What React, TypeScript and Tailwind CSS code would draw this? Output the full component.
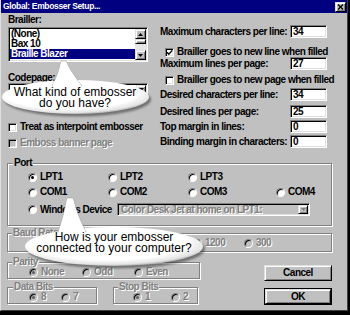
import React from 'react';

const txt = 'text-[10px] font-bold leading-[10px] tracking-[-0.5px] whitespace-nowrap';
const dis = 'text-[#808080] [text-shadow:1px_1px_0_#fff]';
const sunken =
  'border border-t-[#808080] border-l-[#808080] border-b-white border-r-white shadow-[inset_1px_1px_0_#000,inset_-1px_-1px_0_#dfdfdf]';
const raised =
  'border border-t-[#dfdfdf] border-l-[#dfdfdf] border-b-black border-r-black shadow-[inset_1px_1px_0_#fff,inset_-1px_-1px_0_#808080]';
const etched = 'border border-[#808080] shadow-[inset_1px_1px_0_#fff,1px_1px_0_#fff]';

function Radio({ on, off }: { on?: boolean; off?: boolean }) {
  return (
    <span
      className={`flex h-[9px] w-[9px] shrink-0 items-center justify-center rounded-full border border-t-[#808080] border-l-[#808080] border-b-white border-r-white shadow-[inset_1px_1px_0_#000] ${
        off ? 'bg-[#c0c0c0]' : 'bg-white'
      }`}
    >
      {on && <span className={`h-[3px] w-[3px] rounded-full ${off ? 'bg-[#606060]' : 'bg-black'}`} />}
    </span>
  );
}

function Check({ on, off }: { on?: boolean; off?: boolean }) {
  return (
    <span className={`flex h-[9px] w-[9px] shrink-0 items-center justify-center ${sunken} ${off ? 'bg-[#c0c0c0]' : 'bg-white'}`}>
      {on && (
        <svg width="7" height="7" viewBox="0 0 7 7">
          <path d="M1 3.3 L2.8 5.2 L6.2 1.4" fill="none" stroke="#000" strokeWidth="1.4" />
        </svg>
      )}
    </span>
  );
}

function Opt({ label, on, off }: { label: string; on?: boolean; off?: boolean }) {
  return (
    <div className="flex items-center gap-[3px]">
      <Radio on={on} off={off} />
      <span className={`${txt} ${off ? dis : 'text-black'}`}>{label}</span>
    </div>
  );
}

function Arrow({ dir = 'down', gray }: { dir?: 'up' | 'down'; gray?: boolean }) {
  return (
    <svg width="5" height="3" viewBox="0 0 5 3">
      <path d={dir === 'down' ? 'M0 0 H5 L2.5 3 Z' : 'M0 3 H5 L2.5 0 Z'} fill={gray ? '#808080' : '#000'} />
    </svg>
  );
}

function Field({ value }: { value: string }) {
  return (
    <div className={`flex h-[13px] w-[37px] items-center bg-white pl-[2px] ${sunken}`}>
      <span className={txt}>{value}</span>
    </div>
  );
}

function Row({ label, value, className }: { label: string; value: string; className: string }) {
  return (
    <div className={`flex h-[13px] items-center justify-between ${className}`}>
      <span className={txt}>{label}</span>
      <Field value={value} />
    </div>
  );
}

function Bubble({
  id,
  w,
  h,
  cx,
  cy,
  rx,
  ry,
  tail,
}: {
  id: string;
  w: number;
  h: number;
  cx: number;
  cy: number;
  rx: number;
  ry: number;
  tail: string;
}) {
  return (
    <svg className="absolute left-0 top-0 overflow-visible" width={w} height={h}>
      <defs>
        <radialGradient id={id} cx="0.46" cy="0.4" r="0.62">
          <stop offset="0.72" stopColor="#fff" />
          <stop offset="0.9" stopColor="#e4e4e4" />
          <stop offset="1" stopColor="#9c9c9c" />
        </radialGradient>
        <filter id={`${id}b`} x="-10%" y="-10%" width="120%" height="130%">
          <feGaussianBlur stdDeviation="1" />
        </filter>
      </defs>
      <g transform="translate(2 2.5)" fill="#303030" opacity="0.55" filter={`url(#${id}b)`}>
        <ellipse cx={cx} cy={cy} rx={rx} ry={ry} />
      </g>
      <ellipse cx={cx} cy={cy} rx={rx} ry={ry} fill={`url(#${id})`} />
      <path d={tail} fill="#fff" stroke="#9a9a9a" strokeWidth="0.5" />
      <path d={tail} fill="#fff" transform="translate(0 1.5)" />
    </svg>
  );
}

export default function App() {
  return (
    <div className="h-[315px] w-[350px] overflow-hidden bg-black font-['Liberation_Sans',Arial,sans-serif]">
      <div className="relative h-[311px] w-[348px] border-b border-l border-r border-b-[#404040] border-l-[#dfdfdf] border-r-[#404040] bg-[#c0c0c0]">
        {/* title bar */}
        <div className="flex h-[13px] items-center justify-between bg-[#000080] pl-[2px] pr-[1px]">
          <span className="text-[8.5px] font-bold leading-none tracking-[-0.35px] text-white">Global: Embosser Setup...</span>
          <div className={`flex h-[10px] w-[11px] items-center justify-center bg-[#c0c0c0] ${raised}`}>
            <svg width="7" height="6" viewBox="0 0 7 6">
              <path d="M1 0.5 L6 5.5 M6 0.5 L1 5.5" stroke="#000" strokeWidth="1.3" />
            </svg>
          </div>
        </div>

        <div className="pl-[6px] pr-[15px]">
          {/* top section */}
          <div className="flex">
            <div className="ml-[1px] w-[140px]">
              <div className={`mt-[2px] h-[10px] ${txt}`}>Brailler:</div>
              <div className={`mt-[2px] flex h-[35px] bg-white p-[1px] ${sunken}`}>
                <div className="flex-1">
                  <div className={`h-[10px] pl-[1px] ${txt}`}>(None)</div>
                  <div className={`h-[10px] pl-[1px] ${txt}`}>Bax 10</div>
                  <div className={`h-[10px] bg-[#000080] pl-[1px] text-white ${txt}`}>Braille Blazer</div>
                </div>
                <div className="flex w-[11px] flex-col">
                  <div className={`flex h-[10px] items-center justify-center bg-[#c0c0c0] ${raised}`}>
                    <Arrow dir="up" />
                  </div>
                  <div className="flex-1 bg-[#e6e6e6]">
                    <div className={`h-[5px] bg-[#c0c0c0] ${raised}`} />
                  </div>
                  <div className={`flex h-[10px] items-center justify-center bg-[#c0c0c0] ${raised}`}>
                    <Arrow />
                  </div>
                </div>
              </div>
              <div className={`mt-[11px] h-[10px] ${txt}`}>Codepage:</div>
              <div className={`flex h-[13px] bg-white p-[1px] ${sunken}`}>
                <div className="flex-1" />
                <div className={`flex w-[10px] items-center justify-center bg-[#c0c0c0] ${raised}`}>
                  <Arrow />
                </div>
              </div>
              <div className="mt-[26px] flex h-[10px] items-center gap-[3px]">
                <Check />
                <span className={txt}>Treat as interpoint embosser</span>
              </div>
              <div className="mt-[6px] flex h-[10px] items-center gap-[3px]">
                <Check off />
                <span className={`${txt} ${dis}`}>Emboss banner page</span>
              </div>
            </div>

            <div className="ml-[12px] w-[167px]">
              <Row className="mt-[12px]" label="Maximum characters per line:" value="34" />
              <div className="ml-[5px] mt-[9px] flex h-[10px] items-center gap-[3px]">
                <Check on />
                <span className={txt}>Brailler goes to new line when filled</span>
              </div>
              <Row className="" label="Maximum lines per page:" value="27" />
              <div className="ml-[5px] mt-[5px] flex h-[10px] items-center gap-[3px]">
                <Check />
                <span className={txt}>Brailler goes to new page when filled</span>
              </div>
              <Row className="mt-[3px]" label="Desired characters per line:" value="34" />
              <Row className="mt-[4px]" label="Desired lines per page:" value="25" />
              <Row className="mt-[2px]" label="Top margin in lines:" value="0" />
              <Row className="mt-[2px]" label="Binding margin in characters:" value="0" />
            </div>
          </div>

          {/* port */}
          <fieldset className={`mt-[10px] pb-[9px] ${etched}`}>
            <legend className={`ml-[5px] bg-[#c0c0c0] px-[1px] ${txt}`}>Port</legend>
            <div className="mt-[3px] grid h-[12px] grid-cols-[80px_80px_88px_1fr] items-center pl-[20px]">
              <Opt label="LPT1" on />
              <Opt label="LPT2" />
              <Opt label="LPT3" />
            </div>
            <div className="mt-[3px] grid h-[12px] grid-cols-[80px_80px_88px_1fr] items-center pl-[20px]">
              <Opt label="COM1" />
              <Opt label="COM2" />
              <Opt label="COM3" />
              <Opt label="COM4" />
            </div>
            <div className="mt-[5px] flex h-[13px] items-center pl-[20px]">
              <div className="w-[89px]">
                <Opt label="Windows Device" />
              </div>
              <div className={`flex h-[13px] w-[193px] bg-[#c0c0c0] p-[1px] ${sunken}`}>
                <div className={`flex-1 pl-[2px] ${txt} ${dis}`}>Color Desk Jet at home on LPT1:</div>
                <div className={`flex w-[10px] items-center justify-center bg-[#c0c0c0] ${raised}`}>
                  <Arrow gray />
                </div>
              </div>
            </div>
          </fieldset>

          {/* baud */}
          <fieldset className={`mt-[2px] pb-[3px] ${etched}`}>
            <legend className={`ml-[4px] bg-[#c0c0c0] px-[1px] ${txt} ${dis}`}>Baud Rate</legend>
            <div className="grid h-[10px] grid-cols-[51px_51px_51px_51px_1fr] items-center pl-[32px]">
              <Radio on off />
              <Radio off />
              <Radio off />
              <Opt label="1200" off />
              <Opt label="300" off />
            </div>
          </fieldset>

          {/* bottom */}
          <div className="flex justify-between">
            <div className="w-[193px]">
              <fieldset className={`mt-[5px] pb-[1px] ${etched}`}>
                <legend className={`ml-[4px] bg-[#c0c0c0] px-[1px] ${txt} ${dis}`}>Parity</legend>
                <div className="grid h-[10px] grid-cols-[53px_52px_1fr] items-center pl-[21px]">
                  <Opt label="None" on off />
                  <Opt label="Odd" off />
                  <Opt label="Even" off />
                </div>
              </fieldset>
              <div className="mt-[3px] flex">
                <fieldset className={`w-[90px] pb-[1px] ${etched}`}>
                  <legend className={`ml-[5px] bg-[#c0c0c0] px-[1px] ${txt} ${dis}`}>Data Bits</legend>
                  <div className="grid h-[10px] grid-cols-[32px_1fr] items-center pl-[21px]">
                    <Opt label="8" on off />
                    <Opt label="7" off />
                  </div>
                </fieldset>
                <fieldset className={`ml-[16px] w-[85px] pb-[1px] ${etched}`}>
                  <legend className={`ml-[4px] bg-[#c0c0c0] px-[1px] ${txt} ${dis}`}>Stop Bits</legend>
                  <div className="grid h-[10px] grid-cols-[38px_1fr] items-center pl-[19px]">
                    <Opt label="1" on off />
                    <Opt label="2" off />
                  </div>
                </fieldset>
              </div>
            </div>
            <div className="w-[68px]">
              <button className={`mt-[13px] flex h-[16px] w-full items-center justify-center bg-[#c0c0c0] ${raised}`}>
                <span className={txt}>Cancel</span>
              </button>
              <div className="mt-[7px] h-[17px] border border-black">
                <button className={`flex h-full w-full items-center justify-center bg-[#c0c0c0] ${raised}`}>
                  <span className={txt}>OK</span>
                </button>
              </div>
            </div>
          </div>
        </div>

        {/* callout bubbles */}
        <div className="absolute left-0 top-[60px] h-[58px] w-[148px]">
          <Bubble id="b1" w={148} h={58} cx={74.5} cy={37} rx={73.5} ry={17} tail="M60 1 Q58 13 51 26 L81 26 Q70 12 65 1 Z" />
          <div className="relative pt-[27px] text-center text-[12px] leading-[11px] text-black">
            What kind of embosser
            <br />
            do you have?
          </div>
        </div>
        <div className="absolute left-[19px] top-[198px] h-[72px] w-[188px]">
          <Bubble id="b2" w={188} h={72} cx={94} cy={48.5} rx={89} ry={19.5} tail="M47 0 Q44 18 38 34 L66 34 Q57 17 53 0 Z" />
          <div className="relative pt-[34px] text-center text-[12px] leading-[11px] text-black">
            How is your embosser
            <br />
            connected to your computer?
          </div>
        </div>
      </div>
    </div>
  );
}
